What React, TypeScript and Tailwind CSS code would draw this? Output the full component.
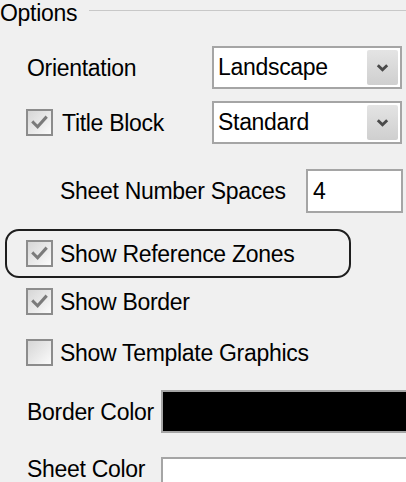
const font = { fontFamily: '"Liberation Sans", Arial, sans-serif' };

function Check({ checked }: { checked: boolean }) {
  return (
    <div className="w-[27px] h-[27px] shrink-0 border-2 border-[#8c8c8c] bg-gradient-to-br from-[#d6d6d6] to-[#fbfbfb] flex items-center justify-center">
      {checked && (
        <svg viewBox="0 0 20 20" className="w-[19px] h-[19px]">
          <polyline points="3.5,10 8,14.5 16.5,5" fill="none" stroke="#7b7b7b" strokeWidth="3.2" strokeLinecap="square" />
        </svg>
      )}
    </div>
  );
}

function Combo({ value }: { value: string }) {
  return (
    <div className="w-[190px] h-[43px] ml-auto mr-[4px] border-2 border-[#a5a5a5] bg-white flex items-center pl-[4px] pr-[2px]">
      <span className="flex-1 text-[23px] tracking-[-0.3px] text-black">{value}</span>
      <div className="w-[31px] h-[35px] rounded-[2px] bg-gradient-to-b from-[#e4e4e4] to-[#cfcfcf] flex items-center justify-center">
        <svg viewBox="0 0 16 16" className="w-[15px] h-[15px]">
          <polyline points="3,5.5 8,10.5 13,5.5" fill="none" stroke="#4a4a4a" strokeWidth="3" />
        </svg>
      </div>
    </div>
  );
}

function Label({ children, className = '' }: { children: React.ReactNode; className?: string }) {
  return (
    <span className={`block shrink-0 text-[23px] leading-[26px] tracking-[-0.3px] text-black whitespace-nowrap ${className}`}>
      {children}
    </span>
  );
}

export default function App() {
  return (
    <div className="w-[406px] h-[482px] overflow-hidden bg-[#f0f0f0]" style={font}>
      {/* Group header */}
      <div className="flex items-start h-[26px]">
        <Label className="text-[#333]">Options</Label>
        <div className="flex-1 h-px bg-[#c8c8c8] ml-[12px] mt-[10px]" />
      </div>

      <div className="flex items-center mt-[20px] pl-[27px]">
        <Label>Orientation</Label>
        <Combo value="Landscape" />
      </div>

      <div className="flex items-center mt-[12px] pl-[26px]">
        <Check checked />
        <Label className="ml-[9px]">Title Block</Label>
        <Combo value="Standard" />
      </div>

      <div className="flex items-center mt-[25px] pl-[60px]">
        <Label>Sheet Number Spaces</Label>
        <div className="w-[97px] h-[44px] ml-auto mr-[3px] border-2 border-[#a5a5a5] bg-white flex items-center pl-[5px]">
          <span className="text-[23px] text-black">4</span>
        </div>
      </div>

      <div className="ml-[5px] mt-[16px] w-[346px] h-[49px] border-2 border-[#1e1e1e] rounded-[14px] flex items-center pl-[19px]">
        <Check checked />
        <Label className="ml-[7px] text-[#111]">Show Reference Zones</Label>
      </div>

      <div className="flex items-center mt-[10px] pl-[26px]">
        <Check checked />
        <Label className="ml-[7px]">Show Border</Label>
      </div>

      <div className="flex items-center mt-[24px] pl-[26px]">
        <Check checked={false} />
        <Label className="ml-[7px]">Show Template Graphics</Label>
      </div>

      <div className="flex items-center mt-[24px] pl-[27px]">
        <Label className="w-[134px]">Border Color</Label>
        <div className="w-[260px] h-[43px] shrink-0 border-2 border-[#a5a5a5] bg-black" />
      </div>

      <div className="flex items-start mt-[24px] pl-[27px]">
        <Label className="w-[134px] mt-[-1px]">Sheet Color</Label>
        <div className="w-[260px] h-[43px] shrink-0 border-2 border-[#a5a5a5] bg-white" />
      </div>
    </div>
  );
}
